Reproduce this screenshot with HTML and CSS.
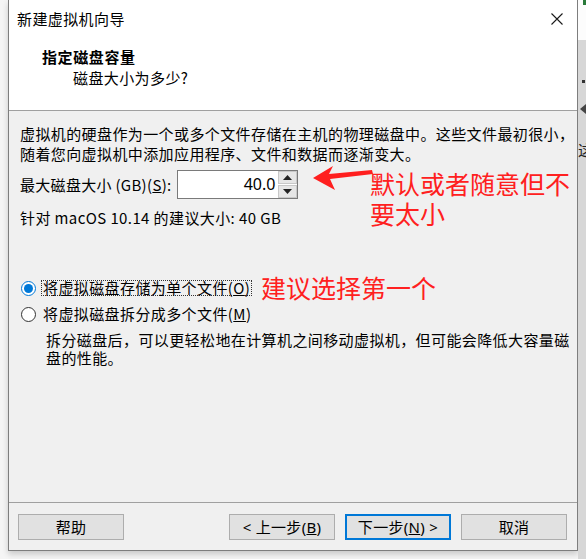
FILE: index.html
```html
<!DOCTYPE html>
<html lang="zh-CN">
<head>
<meta charset="utf-8">
<title>新建虚拟机向导</title>
<link rel="stylesheet" href="styles.css">
</head>
<body>
<div class="screen">
  <div class="gutter"></div>
  <div class="window">
    <div class="titlebar">
      <span class="title">新建虚拟机向导</span>
      <svg class="close" width="12" height="12" viewBox="0 0 12 12"><path d="M0.5 0.5 L11.5 11.5 M11.5 0.5 L0.5 11.5" stroke="#1a1a1a" stroke-width="1.1" fill="none"/></svg>
    </div>
    <div class="header">
      <div class="h1">指定磁盘容量</div>
      <div class="h2">磁盘大小为多少?</div>
    </div>
    <div class="content">
      <p class="para">虚拟机的硬盘作为一个或多个文件存储在主机的物理磁盘中。这些文件最初很小，<br>随着您向虚拟机中添加应用程序、文件和数据而逐渐变大。</p>
      <div class="sizerow">
        <span class="lbl">最大磁盘大小 (GB)(<u>S</u>):</span>
        <div class="spin">
          <div class="field">40.0</div>
          <div class="spinbtns">
            <div class="sb"><svg width="9" height="5" viewBox="0 0 9 5"><path d="M0 5 L4.5 0 L9 5Z" fill="#222"/></svg></div>
            <div class="sb"><svg width="9" height="5" viewBox="0 0 9 5"><path d="M0 0 L4.5 5 L9 0Z" fill="#222"/></svg></div>
          </div>
        </div>
      </div>
      <p class="rec">针对 macOS 10.14 的建议大小: 40 GB</p>
      <div class="radio first">
        <span class="dot on"></span>
        <span class="rlabel focus">将虚拟磁盘存储为单个文件(<u>O</u>)</span>
      </div>
      <div class="radio">
        <span class="dot"></span>
        <span class="rlabel">将虚拟磁盘拆分成多个文件(<u>M</u>)</span>
      </div>
      <p class="desc">拆分磁盘后，可以更轻松地在计算机之间移动虚拟机，但可能会降低大容量磁<br>盘的性能。</p>

      <svg class="arrow" width="62" height="30" viewBox="0 0 62 30"><path d="M1 14 L21 2 L17 10 L60 6 L61 10 L18 15 L23 26 Z" fill="#ff1f1f"/></svg>
      <div class="note note1">默认或者随意但不<br>要太小</div>
      <div class="note note2">建议选择第一个</div>
    </div>
    <div class="footer">
      <button class="btn">帮助</button>
      <span class="spacer"></span>
      <button class="btn">&lt; 上一步(<u>B</u>)</button>
      <button class="btn primary">下一步(<u>N</u>) &gt;</button>
      <button class="btn">取消</button>
    </div>
  </div>
  <div class="side">
    <div class="side-top"><span class="green"></span></div>
    <div class="side-rest">
      <span class="sq"></span>
      <span class="tri"></span>
      <span class="sidechar">这</span>
    </div>
  </div>
</div>
</body>
</html>
```

FILE: styles.css
```css
* { box-sizing: border-box; }
html, body { margin: 0; padding: 0; }
body {
  width: 586px;
  height: 559px;
  overflow: hidden;
  background: #f4f4f4;
  font-family: "Noto Sans", "Noto Sans CJK SC", sans-serif;
  font-size: 15px;
  color: #000;
}
.screen {
  display: flex;
  height: 559px;
}
.gutter { width: 8px; flex: none; background: #f5f5f5; }
.window {
  width: 570px;
  height: 551px;
  flex: none;
  display: flex;
  flex-direction: column;
  background: #f0f0f0;
  border: 1px solid #7e7e7e;
  border-top: none;
  box-shadow: 0 3px 6px rgba(0,0,0,0.18);
}
.titlebar {
  height: 40px;
  background: #fff;
  display: flex;
  align-items: center;
  justify-content: space-between;
  padding: 0 14px 2px 8px;
}
.title {
  font-family: "Noto Sans CJK SC", sans-serif;
  font-size: 15px;
  letter-spacing: 0.4px;
  line-height: 20px;
}
.close { display: block; margin-top: 0px; }
.header {
  height: 71px;
  background: #fff;
  border-bottom: 1px solid #a0a0a0;
  padding: 7px 0 0 33px;
}
.h1 {
  font-family: "Noto Sans CJK SC", sans-serif;
  font-weight: bold;
  font-size: 15px;
  letter-spacing: 0.6px;
  line-height: 20px;
}
.h2 {
  font-family: "Noto Sans CJK SC", sans-serif;
  font-size: 15px;
  letter-spacing: 0.4px;
  line-height: 20px;
  margin: 1px 0 0 31px;
}
.content {
  position: relative;
  flex: 1;
  padding: 13px 0 0 11px;
  border-bottom: 1px solid #a0a0a0;
}
.para, .rec, .desc {
  margin: 0;
  font-family: "Noto Sans CJK SC", sans-serif;
  letter-spacing: 0.4px;
  line-height: 20px;
}
.sizerow {
  display: flex;
  align-items: center;
  margin-top: 6px;
  height: 29px;
}
.lbl {
  letter-spacing: 0.3px;
  line-height: 20px;
  margin-right: 6px;
  font-family: "Noto Sans CJK SC", sans-serif;
}
.spin {
  display: flex;
  height: 29px;
  border: 1px solid #7a7a7a;
  background: #fff;
}
.field {
  width: 100px;
  text-align: right;
  padding-right: 3px;
  line-height: 27px;
  font-size: 16px;
  font-family: "Noto Sans", sans-serif;
}
.spinbtns {
  width: 19px;
  display: flex;
  flex-direction: column;
  gap: 1px;
  background: #fff;
  padding: 0;
}
.sb {
  flex: 1;
  background: #e6e6e6;
  border: 1px solid #c8c8c8;
  display: flex;
  align-items: center;
  justify-content: center;
}
.sb svg { display: block; }
.rec { margin-top: 9px; }
.radio {
  display: flex;
  align-items: center;
  height: 20px;
  margin-top: 6px;
}
.radio.first { margin-top: 50px; }
.dot {
  width: 15px;
  height: 15px;
  border-radius: 50%;
  border: 1px solid #333;
  background: #fff;
  margin: 0 5px 0 1px;
  flex: none;
  position: relative;
}
.dot.on { border-color: #0078d7; }
.dot.on::after {
  content: "";
  position: absolute;
  left: 2px; top: 2px;
  width: 9px; height: 9px;
  border-radius: 50%;
  background: #0078d7;
}
.rlabel {
  font-family: "Noto Sans CJK SC", sans-serif;
  letter-spacing: 0.4px;
  line-height: 14px;
  padding: 0 1px;
  border: 1px dotted transparent;
}
.rlabel.focus { border-color: #333; }
.desc {
  margin: 7px 0 0 26px;
  line-height: 18px;
}
.arrow {
  position: absolute;
  left: 303px;
  top: 53px;
}
.note {
  position: absolute;
  color: #ff2020;
  font-family: "Noto Sans CJK SC", sans-serif;
  font-size: 25px;
  line-height: 30px;
  letter-spacing: 0px;
}
.note1 { left: 361px; top: 57px; }
.note2 { left: 252px; top: 161px; }
.footer {
  height: 47px;
  flex: none;
  display: flex;
  align-items: flex-start;
  padding: 11px 10px 0 9px;
  gap: 10px;
}
.spacer { flex: 1; }
.btn {
  width: 106px;
  height: 26px;
  margin: 0;
  padding: 0;
  background: #e1e1e1;
  border: 1px solid #adadad;
  font-family: "Noto Sans", "Noto Sans CJK SC", sans-serif;
  font-size: 15px;
  letter-spacing: 0.3px;
  line-height: 22px;
  color: #000;
}
.btn.primary { border: 2px solid #0078d7; }
.side {
  width: 8px;
  flex: none;
  display: flex;
  flex-direction: column;
  overflow: hidden;
}
.side-top { height: 40px; background: #fcfcfc; position: relative; }
.green { position: absolute; right: 0; top: 0; width: 3px; height: 5px; background: #2a7a3a; }
.side-rest {
  flex: 1;
  background: #d7d7d7;
  position: relative;
}
.sq { position: absolute; left: 4px; top: 40px; width: 3px; height: 3px; background: #333; }
.tri { position: absolute; left: 2px; top: 64px; width: 0; height: 0; border-top: 5px solid transparent; border-bottom: 5px solid transparent; border-right: 6px solid #444; }
.sidechar { position: absolute; left: 0; top: 100px; font-family: "Noto Sans CJK SC", sans-serif; font-size: 15px; color: #222; line-height: 20px; }
```
